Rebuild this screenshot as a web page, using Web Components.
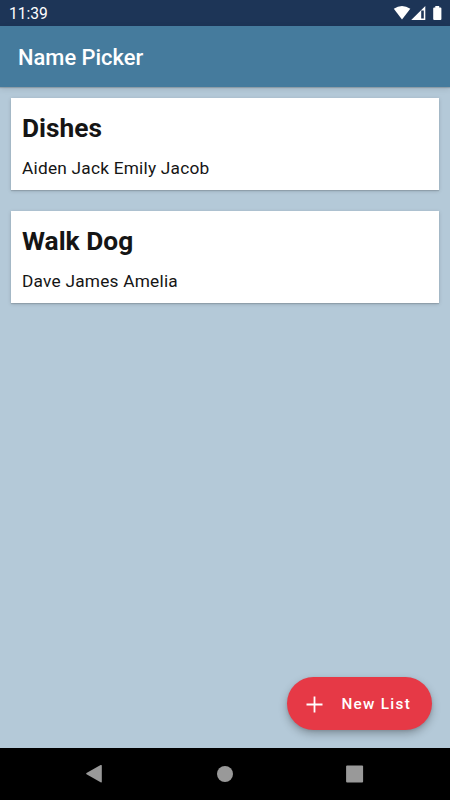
<!DOCTYPE html>
<html lang="en">
<head>
<meta charset="utf-8">
<meta name="viewport" content="width=device-width, initial-scale=1">
<title>Name Picker</title>
<style>
  html, body { height: 100%; margin: 0; }
  body { font-family: Roboto, sans-serif; overflow: hidden; }
</style>
</head>
<body>
<name-picker-app>
  <status-bar slot="top" time="11:39"></status-bar>
  <app-bar slot="top">Name Picker</app-bar>
  <name-list heading="Dishes">Aiden Jack Emily Jacob</name-list>
  <name-list heading="Walk Dog">Dave James Amelia</name-list>
  <fab-button slot="fab">New List</fab-button>
  <nav-bar slot="bottom"></nav-bar>
</name-picker-app>

<script>
(function () {
  'use strict';

  function define(name, html, setup) {
    const template = document.createElement('template');
    template.innerHTML = html;
    customElements.define(name, class extends HTMLElement {
      constructor() {
        super();
        this.attachShadow({ mode: 'open' }).appendChild(template.content.cloneNode(true));
      }

      connectedCallback() {
        if (setup) setup(this, this.shadowRoot);
      }
    });
  }

  define('name-picker-app', `
    <style>
      :host {
        display: flex;
        flex-direction: column;
        height: 100vh;
        background: #b4c9d8;
      }
      header { position: relative; z-index: 1; }
      main {
        flex: 1;
        position: relative;
        display: flex;
        flex-direction: column;
        gap: 21.4px;
        padding: 11px 11px 0;
      }
      /* floats over the list */
      .fab { position: absolute; right: 17.6px; bottom: 17.8px; }
    </style>
    <header><slot name="top"></slot></header>
    <main>
      <slot></slot>
      <div class="fab"><slot name="fab"></slot></div>
    </main>
    <slot name="bottom"></slot>
  `);

  define('status-bar', `
    <style>
      :host {
        display: flex;
        align-items: center;
        justify-content: space-between;
        box-sizing: border-box;
        height: 26px;
        padding: 0 8px 0 9px;
        background: #1d3557;
        color: #fff;
        font-size: 15.6px;
      }
      .time { line-height: 26px; padding-top: 2px; }
      svg { display: block; }
    </style>
    <span class="time"></span>
    <svg width="49" height="16" viewBox="393 5 49 16" fill="#fff" aria-hidden="true">
      <path d="M393.8 8.8Q402 3.2 410.3 8.8L402 19.4Z"/>
      <path fill-rule="evenodd" d="M425.3 6V19.9H411.2ZM423.8 10.4H421.2V18.4H423.8Z"/>
      <path d="M435.3 6h3.9v1.4h1.2q1 0 1 1v10.5q0 1-1 1h-6.2q-1 0-1-1V8.4q0-1 1-1h1.1z"/>
    </svg>
  `, (host, root) => {
    root.querySelector('.time').textContent = host.getAttribute('time');
  });

  define('app-bar', `
    <style>
      :host {
        display: flex;
        align-items: center;
        box-sizing: border-box;
        height: 61px;
        padding: 2px 18px 0;
        background: #457b9d;
        color: #fff;
        box-shadow: 0 1px 1px rgba(0,0,0,.16), 0 2px 6px rgba(0,0,0,.1);
        font-size: 21.9px;
        font-weight: 500;
      }
    </style>
    <slot></slot>
  `);

  define('name-list', `
    <style>
      :host {
        display: block;
        box-sizing: border-box;
        height: 92px;
        padding: 14px 11px 0;
        background: #fff;
        color: #151515;
        box-shadow: 0 1px 1px rgba(0,0,0,.12), 0 1px 4px rgba(0,0,0,.16);
      }
      h2 {
        margin: 0 0 11px;
        font-size: 26.3px;
        font-weight: 700;
        line-height: 32px;
      }
      p {
        margin: 0;
        font-size: 17.3px;
        letter-spacing: .22px;
        line-height: 26px;
      }
    </style>
    <h2></h2>
    <p><slot></slot></p>
  `, (host, root) => {
    root.querySelector('h2').textContent = host.getAttribute('heading');
  });

  define('fab-button', `
    <style>
      :host { display: block; }
      button {
        display: flex;
        align-items: center;
        gap: 18.4px;
        box-sizing: border-box;
        width: 145px;
        height: 52.5px;
        padding: 1px 0 0 18.6px;
        border: 0;
        border-radius: 27px;
        background: #e63946;
        color: #fff;
        box-shadow: 0 4px 8px rgba(0,0,0,.26), 0 1px 3px rgba(0,0,0,.1);
        font: 500 15.3px Roboto, sans-serif;
        letter-spacing: 1.3px;
      }
      svg { flex: none; }
    </style>
    <button type="button">
      <svg width="17" height="17" viewBox="0 0 17 17" stroke="#fff" stroke-width="1.8" aria-hidden="true">
        <path d="M8.5 .5v16M.5 8.5h16"/>
      </svg>
      <span><slot></slot></span>
    </button>
  `);

  define('nav-bar', `
    <style>
      :host {
        position: relative;
        z-index: 1;
        display: flex;
        align-items: center;
        justify-content: space-between;
        box-sizing: border-box;
        height: 52.3px;
        padding: 0 86px 0 85px;
        background: #000;
      }
    </style>
    <svg width="18" height="20" viewBox="0 0 18 20" fill="#999" aria-hidden="true">
      <path d="M15.6 1.1q1.2-.6 1.2.6v16q0 1.2-1.2.6L1.5 10.3q-.8-.6 0-1.2z"/>
    </svg>
    <svg width="18" height="18" viewBox="0 0 18 18" fill="#999" aria-hidden="true">
      <circle cx="9" cy="9" r="8"/>
    </svg>
    <svg width="18" height="18" viewBox="0 0 18 18" fill="#999" aria-hidden="true">
      <rect x=".1" y=".5" width="17" height="17" rx="1"/>
    </svg>
  `);
})();
</script>
</body>
</html>
